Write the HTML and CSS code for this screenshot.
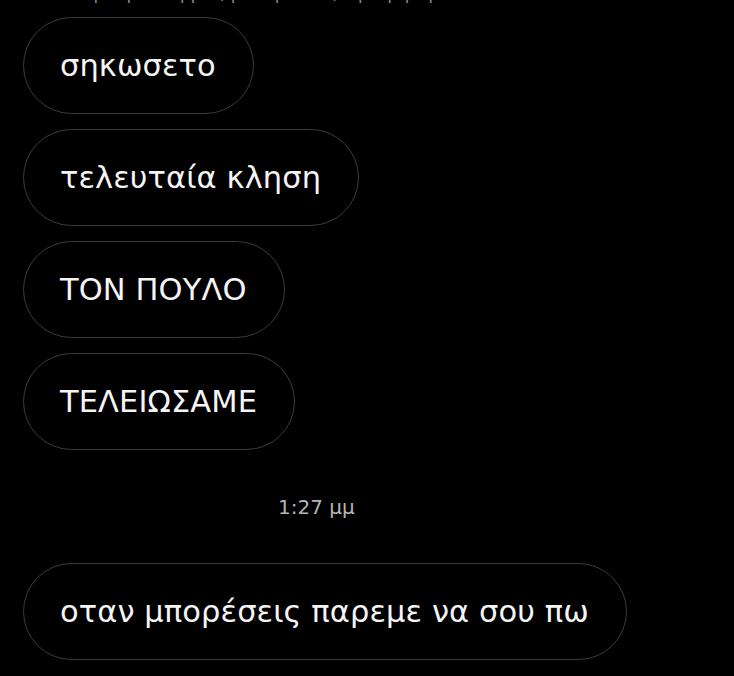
FILE: index.html
```html
<!DOCTYPE html>
<html lang="el">
<head>
<meta charset="utf-8">
<link rel="stylesheet" href="styles.css">
</head>
<body>
<div class="chat">
  <div class="top-meta">Τρίτη 1:14 μμ · (ηλεκτρονικά) · για μήνυμα</div>
  <div class="group">
    <div class="bubble">σηκωσετο</div>
    <div class="bubble">τελευταία κληση</div>
    <div class="bubble">ΤΟΝ ΠΟΥΛΟ</div>
    <div class="bubble">ΤΕΛΕΙΩΣΑΜΕ</div>
  </div>
  <div class="time">1:27 μμ</div>
  <div class="group">
    <div class="bubble">οταν μπορέσεις παρεμε να σου πω</div>
  </div>
</div>
</body>
</html>
```

FILE: styles.css
```css
html, body {
  margin: 0;
  padding: 0;
  background: #000;
  height: 100%;
  overflow: hidden;
}

.chat {
  padding-left: 23px;
  font-family: "DejaVu Sans", "Noto Sans", sans-serif;
}

.top-meta {
  margin-top: -16px;
  height: 18px;
  margin-left: 60px;
  font-size: 17px;
  line-height: 18px;
  color: #8a8a8a;
}

.group {
  display: flex;
  flex-direction: column;
  align-items: flex-start;
  gap: 15px;
  margin-top: 15px;
}

.bubble {
  box-sizing: border-box;
  height: 97px;
  display: flex;
  align-items: center;
  padding: 0 37px 0 36px;
  border: 1.5px solid #3b3b3b;
  border-radius: 49px;
  color: #f4f4f4;
  font-size: 30.5px;
  letter-spacing: 0.1px;
  white-space: nowrap;
}

.time {
  margin-top: 45px;
  margin-left: 255px;
  height: 24px;
  font-size: 20px;
  line-height: 24px;
  color: #b5b5b5;
}

.time + .group {
  margin-top: 44px;
}
```
